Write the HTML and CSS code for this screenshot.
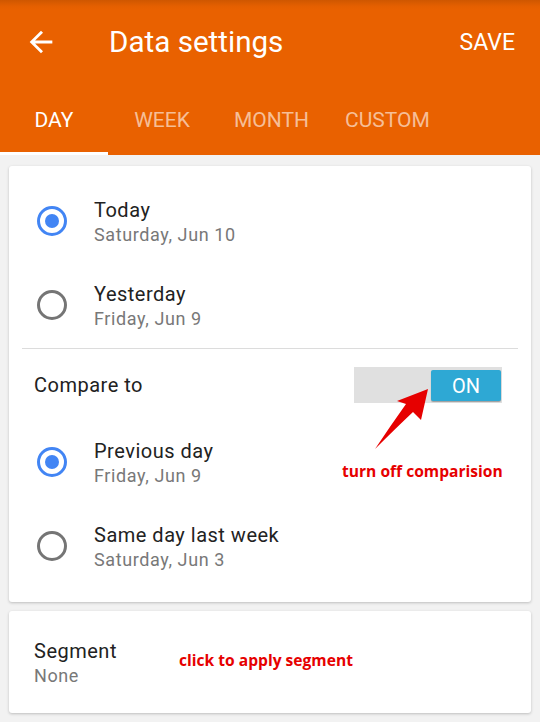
FILE: index.html
```html
<!DOCTYPE html>
<html lang="en">
<head>
<meta charset="utf-8">
<title>Data settings</title>
<link rel="stylesheet" href="styles.css">
</head>
<body>
<div class="page">
  <header class="appbar">
    <div class="toolbar">
      <svg class="back" viewBox="0 0 24 24" width="34" height="34" aria-hidden="true"><path d="M20 11H7.83l5.59-5.59L12 4l-8 8 8 8 1.41-1.41L7.83 13H20v-2z" fill="#fff"/></svg>
      <h1 class="title">Data settings</h1>
      <span class="save">SAVE</span>
    </div>
    <nav class="tabs">
      <span class="tab active">DAY</span>
      <span class="tab">WEEK</span>
      <span class="tab">MONTH</span>
      <span class="tab">CUSTOM</span>
    </nav>
  </header>
  <main class="content">
    <section class="card">
      <div class="option">
        <span class="radio checked"></span>
        <div class="labels"><div class="primary">Today</div><div class="secondary">Saturday, Jun 10</div></div>
      </div>
      <div class="option">
        <span class="radio"></span>
        <div class="labels"><div class="primary">Yesterday</div><div class="secondary">Friday, Jun 9</div></div>
      </div>
      <div class="divider"></div>
      <div class="compare">
        <span class="compare-label">Compare to</span>
        <div class="toggle"><span class="toggle-on">ON</span></div>
      </div>
      <div class="option">
        <span class="radio checked"></span>
        <div class="labels"><div class="primary">Previous day</div><div class="secondary">Friday, Jun 9</div></div>
        <span class="note note-compare">turn off comparision</span>
      </div>
      <div class="option">
        <span class="radio"></span>
        <div class="labels"><div class="primary">Same day last week</div><div class="secondary">Saturday, Jun 3</div></div>
      </div>
    </section>
    <section class="card segment">
      <div class="labels"><div class="primary">Segment</div><div class="secondary">None</div></div>
      <span class="note">click to apply segment</span>
    </section>
  </main>
  <svg class="pointer" width="540" height="722" viewBox="0 0 540 722" aria-hidden="true">
    <path d="M428 389 L421 420 L413 412 Q396 428 375 449 Q391 425 406 404 L397 401 Z" fill="#e60000"/>
  </svg>
</div>
</body>
</html>
```
FILE: styles.css
```css
* { box-sizing: border-box; }
html, body { margin: 0; padding: 0; }
body {
  background: #f2f2f2;
  font-family: Roboto, "Liberation Sans", sans-serif;
  color: #212121;
}
.page {
  position: relative;
  width: 540px;
  height: 722px;
  overflow: hidden;
  background: #f2f2f2;
}
.appbar {
  background: linear-gradient(#cf5700 0, #e45f00 6px, #e96100 10px, #e96100 100%);
  color: #fff;
  height: 155px;
  display: flex;
  flex-direction: column;
}
.toolbar {
  height: 82px;
  display: flex;
  align-items: center;
  padding: 0 24px 0 24px;
}
.back { display: block; flex: none; margin-top: 2px; }
.title {
  margin: 2px 0 0 51px;
  font-weight: 400;
  font-size: 29.6px;
  flex: 1;
}
.save {
  font-size: 23px;
  font-weight: 400;
  margin-right: 1px;
  margin-top: 2px;
}
.tabs {
  flex: 1;
  display: flex;
  align-items: stretch;
}
.tab {
  min-width: 108px;
  padding: 0 18px;
  display: flex;
  align-items: center;
  justify-content: center;
  font-size: 21px;
  color: rgba(255,255,255,0.6);
  border-bottom: 3px solid transparent;
  padding-top: 5px;
}
.tab.active {
  color: #fff;
  border-bottom-color: #fff;
}
.content {
  padding: 11px 9px 0 9px;
  display: flex;
  flex-direction: column;
  gap: 9px;
}
.card {
  background: #fff;
  border-radius: 3px;
  box-shadow: 0 1px 3px rgba(0,0,0,0.22);
}
.card:first-child { padding: 14px 0 13px; }
.option {
  height: 84px;
  display: flex;
  align-items: center;
  padding-left: 28px;
  position: relative;
}
.radio {
  width: 30px;
  height: 30px;
  border-radius: 50%;
  border: 3px solid #757575;
  flex: none;
  display: flex;
  align-items: center;
  justify-content: center;
  margin-top: -2px;
}
.radio.checked { border-color: #4285f4; }
.radio.checked::after {
  content: "";
  width: 14px;
  height: 14px;
  border-radius: 50%;
  background: #4285f4;
}
.labels { margin-left: 27px; }
.primary {
  font-size: 20px;
  letter-spacing: 0.5px;
  line-height: 24px;
  color: #222;
}
.secondary {
  font-size: 18px;
  letter-spacing: 0.6px;
  line-height: 22px;
  color: #787878;
  margin-top: 2px;
}
.divider {
  height: 1px;
  background: #dcdcdc;
  margin: 0 13px;
}
.compare {
  height: 72px;
  display: flex;
  align-items: center;
  justify-content: space-between;
  padding: 0 29px 0 25px;
}
.compare-label { font-size: 20px; letter-spacing: 0.5px; }
.toggle {
  width: 148px;
  height: 36px;
  background: #e0e0e0;
  display: flex;
  justify-content: flex-end;
  align-items: flex-start;
  padding: 3px 1px 0 0;
}
.toggle-on {
  width: 70px;
  height: 31px;
  background: #2ea8d4;
  border-radius: 2px;
  box-shadow: 0 1px 1px rgba(0,0,0,0.3);
  color: #fff;
  font-size: 20px;
  display: flex;
  align-items: center;
  justify-content: center;
}
.note {
  font-family: "Open Sans", "DejaVu Sans", sans-serif;
  font-weight: 700;
  font-size: 15.6px;
  color: #e60000;
}
.note-compare {
  position: absolute;
  left: 333px;
  top: 39px;
}
.segment {
  height: 102px;
  display: flex;
  align-items: center;
  padding-left: 25px;
}
.segment .labels { margin-left: 0; width: 145px; margin-top: 2px; }
.segment .note { margin-top: -5px; }
.pointer {
  position: absolute;
  left: 0;
  top: 0;
  pointer-events: none;
}
```
